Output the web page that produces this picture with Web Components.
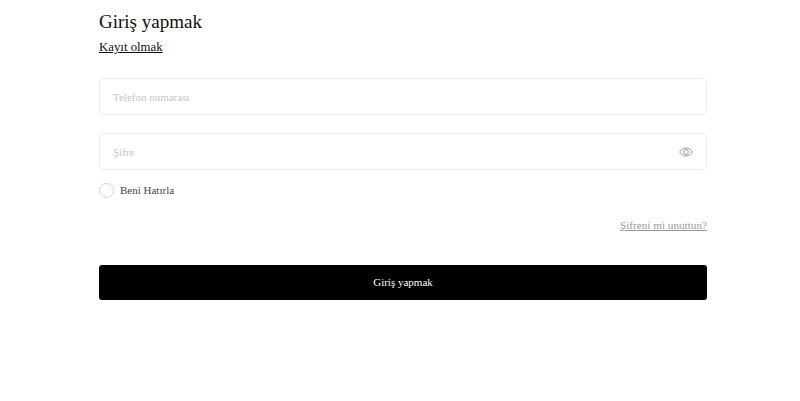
<!DOCTYPE html>
<html lang="tr">
<head>
<meta charset="utf-8">
<title>Giriş yapmak</title>
<style>
html, body { margin: 0; background: #fff; }
body { font-family: "Liberation Serif", "Times New Roman", serif; }
</style>
</head>
<body>
<login-form></login-form>

<template id="field-tpl">
  <style>
    :host { display: block; }
    .box {
      display: flex;
      align-items: center;
      height: 37px;
      box-sizing: border-box;
      padding: 0 13px;
      border: 1px solid #ebebeb;
      border-radius: 5px;
      background: #fff;
    }
    input {
      flex: 1;
      min-width: 0;
      border: 0;
      outline: 0;
      padding: 0;
      background: none;
      font: 11px "Liberation Serif", "Times New Roman", serif;
      color: #222;
    }
    input::placeholder { color: #c4c4c4; opacity: 1; }
    svg { display: none; flex: none; }
    :host([eye]) svg { display: block; }
  </style>
  <div class="box">
    <input>
    <svg width="14" height="14" viewBox="0 0 15 15" fill="none" stroke="#8c8c8c" stroke-width="1">
      <path d="M.8 7.5C2.4 4.7 4.7 3.3 7.5 3.3s5.100 1.400 6.700 4.200c-1.600 2.800-3.900 4.200-6.700 4.200S2.400 10.300.8 7.500z"/>
      <circle cx="7.500" cy="7.500" r="2.500"/>
    </svg>
  </div>
</template>

<template id="check-tpl">
  <style>
    :host { display: flex; align-items: center; gap: 6px; font-size: 11px; color: #444; }
    .dot {
      width: 15px;
      height: 15px;
      box-sizing: border-box;
      border: 1px solid #d4d4d4;
      border-radius: 50%;
      background: #fff;
    }
    .label { padding-bottom: 2px; }
  </style>
  <span class="dot"></span><span class="label"><slot></slot></span>
</template>

<template id="form-tpl">
  <style>
    :host { display: block; box-sizing: border-box; width: 608px; margin-left: 99px; font-family: "Liberation Serif", "Times New Roman", serif; }
    h1 { margin: 0; padding-top: 10px; font-size: 19px; line-height: 23px; font-weight: 400; color: #111; }
    .reg { display: block; margin-top: 6px; width: max-content; font-size: 12.800px; line-height: 16px; color: #111; text-decoration: underline; }
    form-field.phone { margin-top: 23px; }
    form-field.pass { margin-top: 18px; }
    remember-check { margin-top: 13px; }
    .forgot { display: block; margin-top: 20px; text-align: right; font-size: 11.200px; line-height: 14px; color: #999; text-decoration: underline; }
    button {
      display: block;
      width: 100%;
      height: 35px;
      margin-top: 33px;
      padding: 0 0 2px;
      border: 0;
      border-radius: 3px;
      background: #000;
      color: #fff;
      font: 11px "Liberation Serif", "Times New Roman", serif;
    }
  </style>
  <h1>Giriş yapmak</h1>
  <a class="reg" href="#">Kayıt olmak</a>
  <form-field class="phone" placeholder="Telefon numarası"></form-field>
  <form-field class="pass" placeholder="Şifre" type="password" eye></form-field>
  <remember-check>Beni Hatırla</remember-check>
  <a class="forgot" href="#">Şifreni mi unuttun?</a>
  <button type="button">Giriş yapmak</button>
</template>

<script>
class FormField extends HTMLElement {
    constructor() {
        super();
        this.attachShadow({ mode: "open" });
        this.shadowRoot.appendChild(document.querySelector("#field-tpl").content.cloneNode(true));
    }
    connectedCallback() {
        const input = this.shadowRoot.querySelector("input");
        input.placeholder = this.getAttribute("placeholder") || "";
        input.type = this.getAttribute("type") || "text";
    }
}

class RememberCheck extends HTMLElement {
    constructor() {
        super();
        this.attachShadow({ mode: "open" });
        this.shadowRoot.appendChild(document.querySelector("#check-tpl").content.cloneNode(true));
    }
}

class LoginForm extends HTMLElement {
    constructor() {
        super();
        this.attachShadow({ mode: "open" });
        this.shadowRoot.appendChild(document.querySelector("#form-tpl").content.cloneNode(true));
    }
}

customElements.define("form-field", FormField);
customElements.define("remember-check", RememberCheck);
customElements.define("login-form", LoginForm);
</script>
</body>
</html>
